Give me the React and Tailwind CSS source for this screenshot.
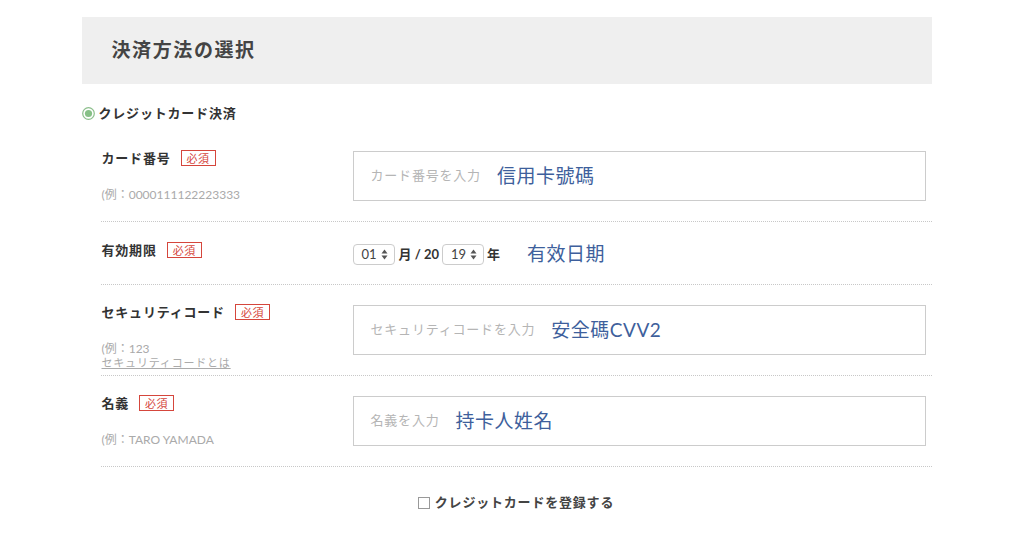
import React from "react";

const font = { fontFamily: 'Lato, "Noto Sans CJK JP", sans-serif' };

function Badge() {
  return (
    <span className="ml-[10px] inline-flex h-[16px] items-center border border-[#d5463c] px-[5px] text-[11px] leading-none text-[#d5463c] tracking-[0.5px]">
      必須
    </span>
  );
}

function Label({ children }) {
  return (
    <div className="flex h-[16px] items-center mt-[-1px]">
      <span className="text-[13px] font-bold text-[#333] tracking-[0.8px] leading-none">{children}</span>
      <Badge />
    </div>
  );
}

function Example({ children, className = "" }) {
  return <div className={"text-[12px] text-[#aaa] leading-[14px] " + className}>{children}</div>;
}

function Input({ placeholder, value }) {
  return (
    <div className="flex h-[50px] w-[573px] shrink-0 items-center border border-[#ccc] bg-white pl-[17px]">
      <span className="text-[13px] text-[#b5b5b5] tracking-[0.8px]">{placeholder}</span>
      <span className="ml-[16px] text-[19px] text-[#3e5f9c] tracking-[0.5px]">{value}</span>
    </div>
  );
}

function Spinner() {
  return (
    <svg width="7" height="11" viewBox="0 0 7 11" className="ml-[4px]">
      <path d="M3.5 0.5 L6.5 4.5 L0.5 4.5 Z" fill="#555" />
      <path d="M3.5 10.5 L6.5 6.5 L0.5 6.5 Z" fill="#555" />
    </svg>
  );
}

function Select({ value }) {
  return (
    <div className="flex h-[21px] w-[42px] items-center rounded-[4px] border border-[#ccc] bg-white pl-[8px]">
      <span className="text-[13px] text-[#444] leading-none">{value}</span>
      <Spinner />
    </div>
  );
}

export default function App() {
  return (
    <div className="min-h-[545px] bg-white" style={font}>
      <div className="mx-auto w-[850px] pt-[17px]">
        <div className="flex h-[67px] items-center bg-[#efefef] pl-[30px]">
          <h1 className="text-[19px] font-bold text-[#444] tracking-[1.6px]">決済方法の選択</h1>
        </div>

        <div className="mt-[21px] flex h-[16px] items-center">
          <svg width="13" height="13" viewBox="0 0 13 13">
            <circle cx="6.5" cy="6.5" r="5.8" fill="white" stroke="#8cbf8c" strokeWidth="1.2" />
            <circle cx="6.5" cy="6.5" r="3.6" fill="#86c086" />
          </svg>
          <span className="ml-[4px] text-[13px] font-bold text-[#333] tracking-[0.8px] leading-none">
            クレジットカード決済
          </span>
        </div>

        <div className="mt-[9px] pl-[19px]">
          {/* Card number */}
          <div className="flex h-[92px] border-b border-dotted border-[#c8c8c8] pt-[21px]">
            <div className="w-[252px] shrink-0 pl-[1px]">
              <Label>カード番号</Label>
              <Example className="mt-[22px]">(例：0000111122223333</Example>
            </div>
            <Input placeholder="カード番号を入力" value="信用卡號碼" />
          </div>

          {/* Expiry */}
          <div className="flex h-[63px] border-b border-dotted border-[#c8c8c8] pt-[21px]">
            <div className="w-[252px] shrink-0 pl-[1px]">
              <Label>有効期限</Label>
            </div>
            <div className="mt-[1px] flex h-[21px] items-center">
              <Select value="01" />
              <span className="ml-[4px] text-[13px] font-bold text-[#333]">月 / 20</span>
              <div className="ml-[3px]">
                <Select value="19" />
              </div>
              <span className="ml-[3px] text-[13px] font-bold text-[#333]">年</span>
              <span className="ml-[27px] text-[19px] text-[#3e5f9c] tracking-[0.5px]">有效日期</span>
            </div>
          </div>

          {/* Security code */}
          <div className="flex h-[91px] border-b border-dotted border-[#c8c8c8] pt-[20px]">
            <div className="w-[252px] shrink-0 pl-[1px]">
              <Label>セキュリティコード</Label>
              <Example className="mt-[22px]">(例：123</Example>
              <div className="text-[11px] leading-[14px] text-[#aaa] underline tracking-[0.8px]">
                セキュリティコードとは
              </div>
            </div>
            <Input placeholder="セキュリティコードを入力" value="安全碼CVV2" />
          </div>

          {/* Name */}
          <div className="flex h-[91px] border-b border-dotted border-[#c8c8c8] pt-[20px]">
            <div className="w-[252px] shrink-0 pl-[1px]">
              <Label>名義</Label>
              <Example className="mt-[22px]">(例：TARO YAMADA</Example>
            </div>
            <Input placeholder="名義を入力" value="持卡人姓名" />
          </div>

          <div className="mt-[29px] flex items-center justify-center">
            <span className="inline-block h-[12px] w-[12px] border border-[#999] bg-white" />
            <span className="ml-[5px] text-[13px] font-bold text-[#444] tracking-[0.8px] leading-none">
              クレジットカードを登録する
            </span>
          </div>
        </div>
      </div>
    </div>
  );
}
